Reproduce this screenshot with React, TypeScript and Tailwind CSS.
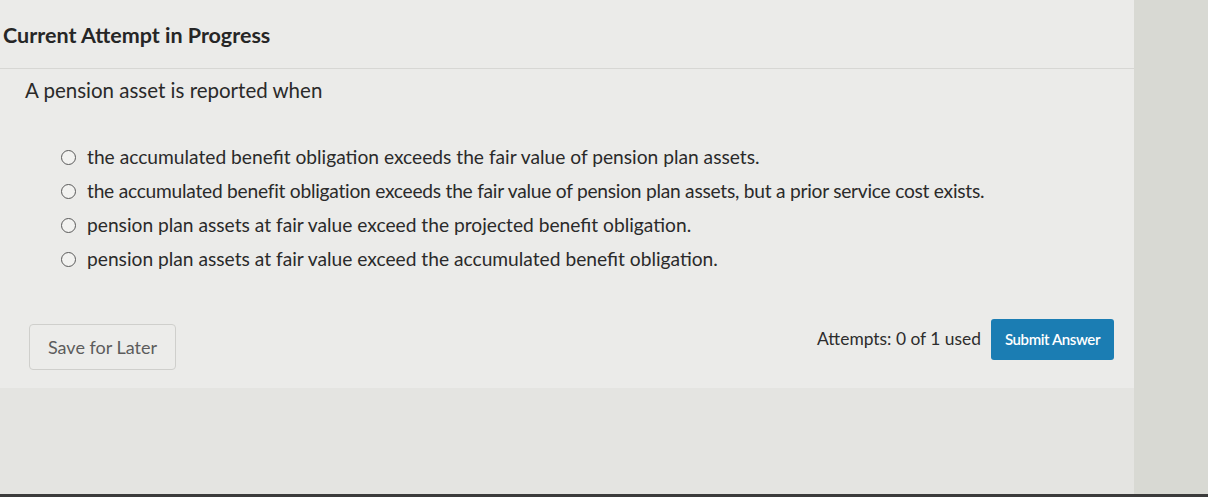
import React from "react";

const options = [
  "the accumulated benefit obligation exceeds the fair value of pension plan assets.",
  "the accumulated benefit obligation exceeds the fair value of pension plan assets, but a prior service cost exists.",
  "pension plan assets at fair value exceed the projected benefit obligation.",
  "pension plan assets at fair value exceed the accumulated benefit obligation.",
];

export default function App() {
  return (
    <div
      className="w-[1208px] h-[497px] overflow-hidden bg-[#e4e4e1] flex flex-col"
      style={{ fontFamily: "Lato, 'Open Sans', sans-serif" }}
    >
      <div className="flex flex-1">
        <div className="w-[1134px] flex flex-col">
          <div className="bg-[#ebebe9] flex flex-col pb-[18px]">
            <div className="pl-[3px] pt-[21px] pb-[19px] border-b border-[#d7d7d4]">
              <h1 className="text-[21.5px] font-bold text-[#262626] leading-[28px]">
                Current Attempt in Progress
              </h1>
            </div>
            <p className="pl-[25px] pt-[7px] text-[20.5px] text-[#2a2a2a] leading-[28px]">
              A pension asset is reported when
            </p>
            <div className="flex flex-col gap-[8px] pl-[61px] pt-[40px]">
              {options.map((o, i) => (
                <label key={i} className="flex items-center gap-[11px] h-[26px]">
                  <span className="w-[15px] h-[15px] rounded-full border-[1.5px] border-[#5a5a5a] bg-[#f2f2f0] shrink-0" />
                  <span
                    className={
                      "text-[19.2px] text-[#2a2a2a] leading-[26px] whitespace-nowrap " +
                      (i === 1 ? "tracking-[-0.25px]" : "")
                    }
                  >
                    {o}
                  </span>
                </label>
              ))}
            </div>
            <div className="flex items-start justify-between pl-[29px] pr-[20px] pt-[47px]">
              <button className="h-[46px] w-[147px] rounded-[4px] border border-[#cfcfcc] bg-[#ececea] text-[18px] text-[#5c5c5c] mt-[5px]">
                Save for Later
              </button>
              <div className="flex items-center gap-[10px]">
                <span className="text-[17.4px] text-[#2d2d2d]">Attempts: 0 of 1 used</span>
                <button className="h-[41px] w-[123px] rounded-[3px] bg-[#1b7db3] text-white text-[15px] font-semibold tracking-[-0.4px]">
                  Submit Answer
                </button>
              </div>
            </div>
          </div>
        </div>
        <div className="flex-1 bg-[#d8d9d3]" />
      </div>
      <div className="h-[3px] bg-[#3b3b3b]" />
    </div>
  );
}
